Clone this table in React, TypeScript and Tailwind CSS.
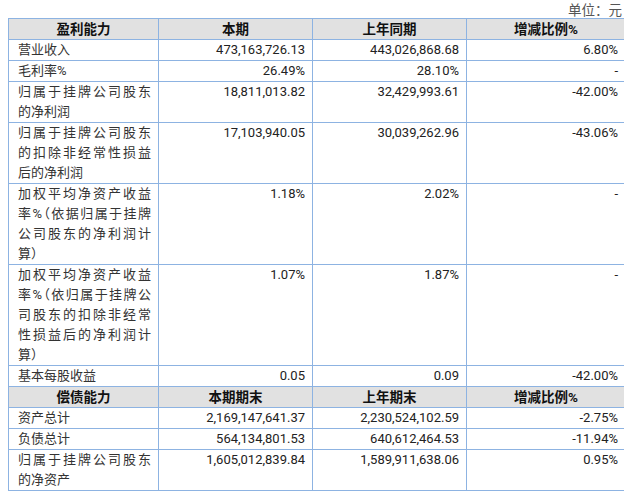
import React from "react"

type Row = {
  label: string[]
  cur: string
  prev: string
  change: string
}

const profitRows: Row[] = [
  { label: ["营业收入"], cur: "473,163,726.13", prev: "443,026,868.68", change: "6.80%" },
  { label: ["毛利率%"], cur: "26.49%", prev: "28.10%", change: "-" },
  { label: ["归属于挂牌公司股东", "的净利润"], cur: "18,811,013.82", prev: "32,429,993.61", change: "-42.00%" },
  {
    label: ["归属于挂牌公司股东", "的扣除非经常性损益", "后的净利润"],
    cur: "17,103,940.05",
    prev: "30,039,262.96",
    change: "-43.06%",
  },
  {
    label: ["加权平均净资产收益", "率%（依据归属于挂牌", "公司股东的净利润计", "算）"],
    cur: "1.18%",
    prev: "2.02%",
    change: "-",
  },
  {
    label: ["加权平均净资产收益", "率%（依归属于挂牌公", "司股东的扣除非经常", "性损益后的净利润计", "算）"],
    cur: "1.07%",
    prev: "1.87%",
    change: "-",
  },
  { label: ["基本每股收益"], cur: "0.05", prev: "0.09", change: "-42.00%" },
]

const debtRows: Row[] = [
  { label: ["资产总计"], cur: "2,169,147,641.37", prev: "2,230,524,102.59", change: "-2.75%" },
  { label: ["负债总计"], cur: "564,134,801.53", prev: "640,612,464.53", change: "-11.94%" },
  { label: ["归属于挂牌公司股东", "的净资产"], cur: "1,605,012,839.84", prev: "1,589,911,638.06", change: "0.95%" },
]

// border + cell basics
const cell = "border border-[#8db3e2] p-0 align-top leading-[20px]"

function Label({ lines }: { lines: string[] }) {
  return (
    <>
      {lines.map((l, i) => (
        <div
          key={i}
          className={`whitespace-nowrap ${lines.length > 1 && i < lines.length - 1 ? "[text-align-last:justify] text-justify" : ""}`}
        >
          {l}
        </div>
      ))}
    </>
  )
}

function HeadRow({ cols }: { cols: string[] }) {
  return (
    <tr className="bg-[#e1e1e1]">
      {cols.map((c, i) => (
        <td key={i} className={`${cell} text-center text-[13.5px] font-bold text-[#111]`}>
          {c}
        </td>
      ))}
    </tr>
  )
}

function DataRow({ row }: { row: Row }) {
  return (
    <tr>
      <td className={`${cell} pl-[9px] pr-[7px] text-[13px] text-[#333] [font-feature-settings:'halt']`}>
        <Label lines={row.label} />
      </td>
      <td className={`${cell} pr-[7px] text-right text-[13px]`}>{row.cur}</td>
      <td className={`${cell} pr-[7px] text-right text-[13px]`}>{row.prev}</td>
      <td className={`${cell} pr-[7px] text-right text-[13px]`}>{row.change}</td>
    </tr>
  )
}

export default function App() {
  return (
    <div className="w-[624px] h-[495px] overflow-hidden bg-white font-['Roboto','Noto_Sans_CJK_SC',sans-serif] text-[#222]">
      <div className="h-[18px] pr-[2px] text-right text-[13.5px] leading-[18px] text-[#555] font-['Noto_Sans_CJK_SC',sans-serif]">
        单位：元
      </div>
      <table className="ml-[8px] w-[617px] table-fixed border-collapse">
        <colgroup>
          <col className="w-[150px]" />
          <col className="w-[154px]" />
          <col className="w-[154px]" />
          <col className="w-[159px]" />
        </colgroup>
        <tbody>
          <HeadRow cols={["盈利能力", "本期", "上年同期", "增减比例%"]} />
          {profitRows.map((r, i) => (
            <DataRow key={i} row={r} />
          ))}
          <HeadRow cols={["偿债能力", "本期期末", "上年期末", "增减比例%"]} />
          {debtRows.map((r, i) => (
            <DataRow key={i} row={r} />
          ))}
        </tbody>
      </table>
    </div>
  )
}
